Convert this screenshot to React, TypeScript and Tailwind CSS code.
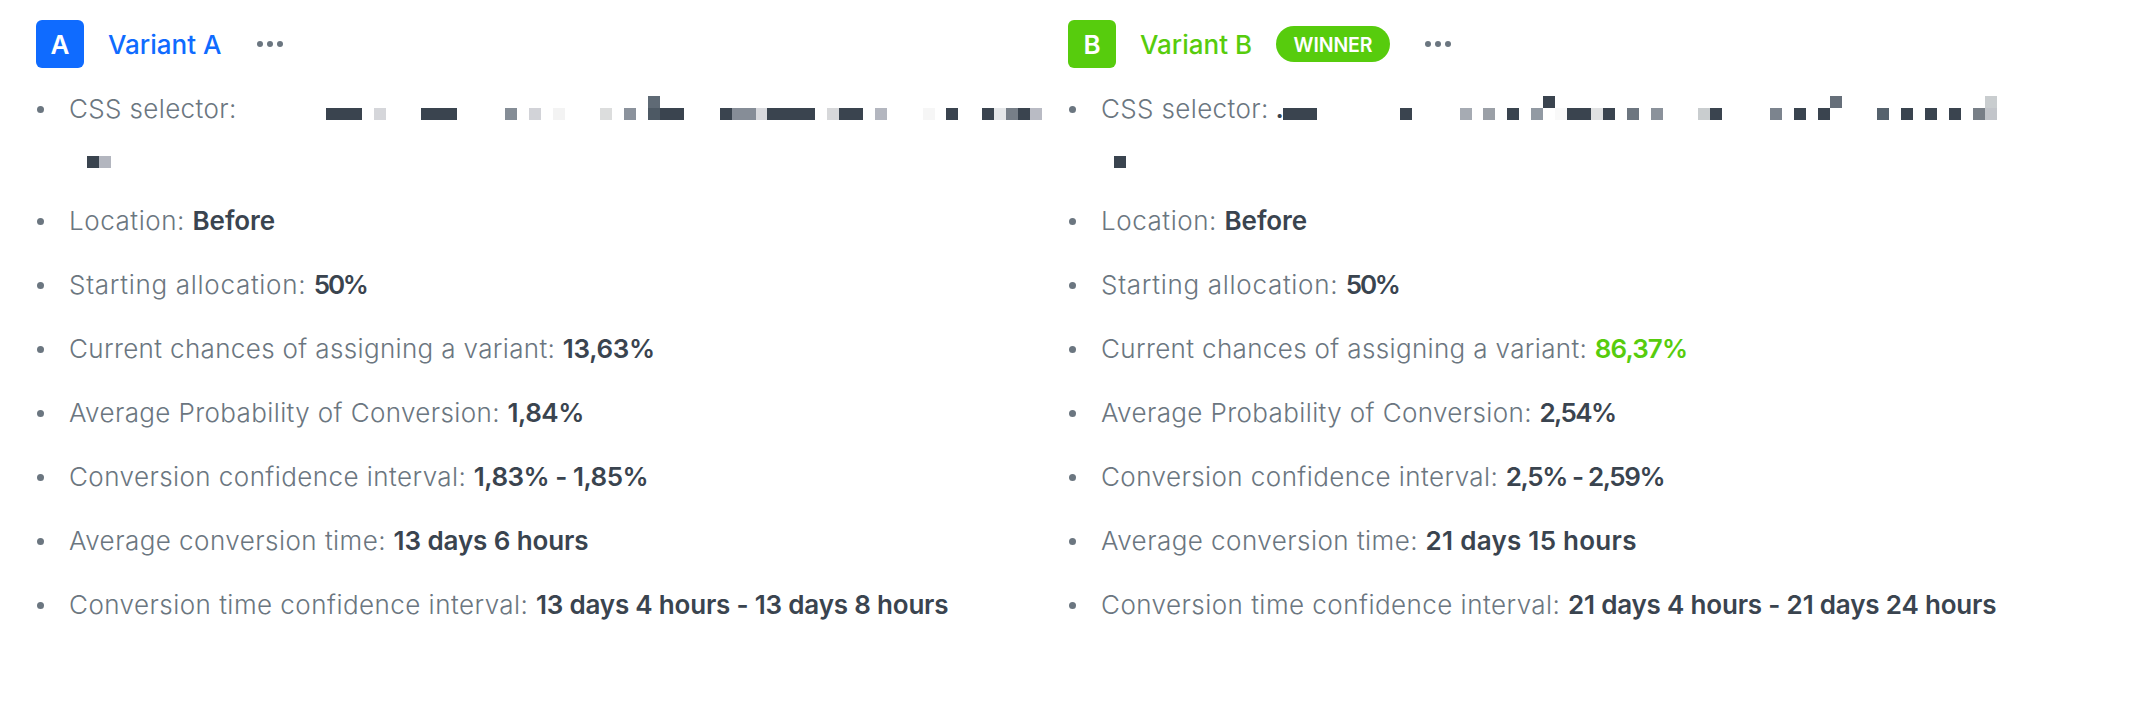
import clsx from "clsx";

const DARK = "#3a444f";

// x, y, width, height, fill - relative to the first detail row
type Cell = [number, number, number, number, string];

type Detail = {
  label: string;
  value: string;
  labelClass: string;
  valueClass: string;
};

const cellsA: Cell[] = [
  [290, 23, 36, 12, DARK],
  [338, 23, 12, 12, "#d5d6da"],
  [385, 23, 36, 12, DARK],
  [469, 23, 12, 12, "#858d96"],
  [493, 23, 12, 12, "#d2d3d8"],
  [517, 23, 12, 12, "#f3f3f3"],
  [564, 23, 12, 12, "#dcdddd"],
  [588, 23, 12, 12, "#8b929c"],
  [612, 11, 12, 12, "#5f6a75"],
  [612, 23, 12, 12, "#4d5964"],
  [624, 23, 24, 12, DARK],
  [684, 23, 12, 12, DARK],
  [696, 23, 24, 12, "#868d97"],
  [720, 23, 12, 12, "#d8d9dd"],
  [731, 23, 48, 12, DARK],
  [791, 23, 12, 12, "#d7d8da"],
  [803, 23, 24, 12, DARK],
  [839, 23, 12, 12, "#b3b6bf"],
  [887, 23, 12, 12, "#f6f6f6"],
  [910, 23, 12, 12, DARK],
  [946, 23, 12, 12, DARK],
  [958, 23, 12, 12, "#e5e7e9"],
  [970, 23, 12, 12, "#777f88"],
  [982, 23, 12, 12, DARK],
  [994, 23, 12, 12, "#b9bbc4"],
  [51, 71, 12, 12, DARK],
  [63, 71, 12, 12, "#b3b6bf"],
];

const cellsB: Cell[] = [
  [215, 23, 34, 12, DARK],
  [332, 23, 12, 12, DARK],
  [392, 23, 12, 12, "#a6abb3"],
  [415, 23, 12, 12, "#9ba0a7"],
  [439, 23, 12, 12, DARK],
  [463, 23, 12, 12, "#929aa3"],
  [475, 11, 12, 12, DARK],
  [487, 23, 12, 12, "#f9f9f9"],
  [499, 23, 24, 12, DARK],
  [523, 23, 12, 12, "#e0e1e2"],
  [535, 23, 12, 12, DARK],
  [559, 23, 12, 12, "#6d7680"],
  [583, 23, 12, 12, "#8b929b"],
  [630, 23, 12, 12, "#c9cdcf"],
  [642, 23, 12, 12, DARK],
  [702, 23, 12, 12, "#7c848e"],
  [726, 23, 12, 12, DARK],
  [750, 23, 12, 12, DARK],
  [762, 11, 12, 12, "#666f7a"],
  [809, 23, 12, 12, "#56626d"],
  [833, 23, 12, 12, DARK],
  [857, 23, 12, 12, DARK],
  [881, 23, 12, 12, DARK],
  [905, 23, 12, 12, "#787f87"],
  [917, 11, 12, 12, "#c9cdcf"],
  [917, 23, 12, 12, "#c2c5ca"],
  [46, 71, 12, 12, DARK],
];

const detailsA: Detail[] = [
  { label: "Location:", value: "Before", labelClass: "tracking-[0.55px]", valueClass: "tracking-[-0.05px]" },
  { label: "Starting allocation:", value: "50%", labelClass: "tracking-[0.7px]", valueClass: "tracking-[-2.2px]" },
  { label: "Current chances of assigning a variant:", value: "13,63%", labelClass: "tracking-[0.35px]", valueClass: "tracking-[-0.3px]" },
  { label: "Average Probability of Conversion:", value: "1,84%", labelClass: "tracking-[0.38px]", valueClass: "tracking-[-0.45px]" },
  { label: "Conversion confidence interval:", value: "1,83% - 1,85%", labelClass: "tracking-[0.43px]", valueClass: "tracking-[-0.5px]" },
  { label: "Average conversion time:", value: "13 days 6 hours", labelClass: "tracking-[0.46px]", valueClass: "tracking-[-0.1px]" },
  { label: "Conversion time confidence interval:", value: "13 days 4 hours - 13 days 8 hours", labelClass: "tracking-[0.46px]", valueClass: "tracking-[-0.19px]" },
];

const detailsB: Detail[] = [
  { label: "Location:", value: "Before", labelClass: "tracking-[0.55px]", valueClass: "tracking-[-0.05px]" },
  { label: "Starting allocation:", value: "50%", labelClass: "tracking-[0.7px]", valueClass: "tracking-[-2.2px]" },
  { label: "Current chances of assigning a variant:", value: "86,37%", labelClass: "tracking-[0.35px]", valueClass: "tracking-[-0.9px] text-[#57cc0d]" },
  { label: "Average Probability of Conversion:", value: "2,54%", labelClass: "tracking-[0.38px]", valueClass: "tracking-[-1.6px]" },
  { label: "Conversion confidence interval:", value: "2,5% - 2,59%", labelClass: "tracking-[0.43px]", valueClass: "tracking-[-1.4px]" },
  { label: "Average conversion time:", value: "21 days 15 hours", labelClass: "tracking-[0.46px]", valueClass: "tracking-[0.27px]" },
  { label: "Conversion time confidence interval:", value: "21 days 4 hours - 21 days 24 hours", labelClass: "tracking-[0.46px]", valueClass: "tracking-[-0.18px]" },
];

function Bullet() {
  return <span className="mt-[21px] mr-[25.5px] ml-[1px] size-[6.5px] shrink-0 rounded-full bg-[#6b7680]" />;
}

function MoreMenu() {
  return (
    <button className="flex gap-1" aria-label="More">
      <span className="size-1.5 rounded-full bg-[#6b7680]" />
      <span className="size-1.5 rounded-full bg-[#6b7680]" />
      <span className="size-1.5 rounded-full bg-[#6b7680]" />
    </button>
  );
}

function Variant({
  letter,
  winner,
  selector,
  cells,
  details,
}: {
  letter: string;
  winner?: boolean;
  selector?: string;
  cells: Cell[];
  details: Detail[];
}) {
  return (
    <section className="flex flex-col">
      <div className="flex h-12 items-center text-[26px] leading-[50px]">
        <div
          className={clsx(
            "size-12 rounded-md text-center font-semibold text-white",
            winner ? "bg-[#57cc0d]" : "bg-[#0f6bff]"
          )}
        >
          {letter}
        </div>
        <h2 className={clsx("ml-6 h-12 font-[550]", winner ? "text-[#57cc0d]" : "text-[#0f6bff]")}>
          Variant {letter}
        </h2>
        {winner && (
          <span className="ml-6 flex h-9 w-[114px] items-center justify-center rounded-full bg-[#57cc0d] pt-0.5 text-[19.5px] font-semibold tracking-[-0.1px] text-white">
            WINNER
          </span>
        )}
        <div className={winner ? "ml-[35px]" : "ml-9"}>
          <MoreMenu />
        </div>
      </div>

      <ul className="mt-[17px] flex flex-col gap-4 text-[26px] leading-[48px] font-[330] text-[#6b7680]">
        <li className="relative flex h-24">
          <Bullet />
          <span className="tracking-[0.36px]">CSS selector:</span>
          {selector && <span className="ml-[7px] font-semibold text-[#3a444f]">{selector}</span>}
          {/* pixelated selector */}
          <svg className="absolute top-0 left-0" width="1010" height="96" shapeRendering="crispEdges">
            {cells.map(([x, y, width, height, fill]) => (
              <rect key={`${x}-${y}`} x={x} y={y} width={width} height={height} fill={fill} />
            ))}
          </svg>
        </li>
        {details.map((item) => (
          <li key={item.label} className="flex whitespace-nowrap">
            <Bullet />
            <span className={item.labelClass}>{item.label}</span>
            <span
              className={clsx(
                "ml-[7.5px] font-semibold",
                !item.valueClass.includes("text-") && "text-[#3a444f]",
                item.valueClass
              )}
            >
              {item.value}
            </span>
          </li>
        ))}
      </ul>
    </section>
  );
}

export default function App() {
  return (
    <div className="grid h-[706px] grid-cols-[1032px_1fr] bg-white pt-5 pl-9 font-['Inter',sans-serif]">
      <Variant letter="A" cells={cellsA} details={detailsA} />
      <Variant letter="B" winner selector="." cells={cellsB} details={detailsB} />
    </div>
  );
}
